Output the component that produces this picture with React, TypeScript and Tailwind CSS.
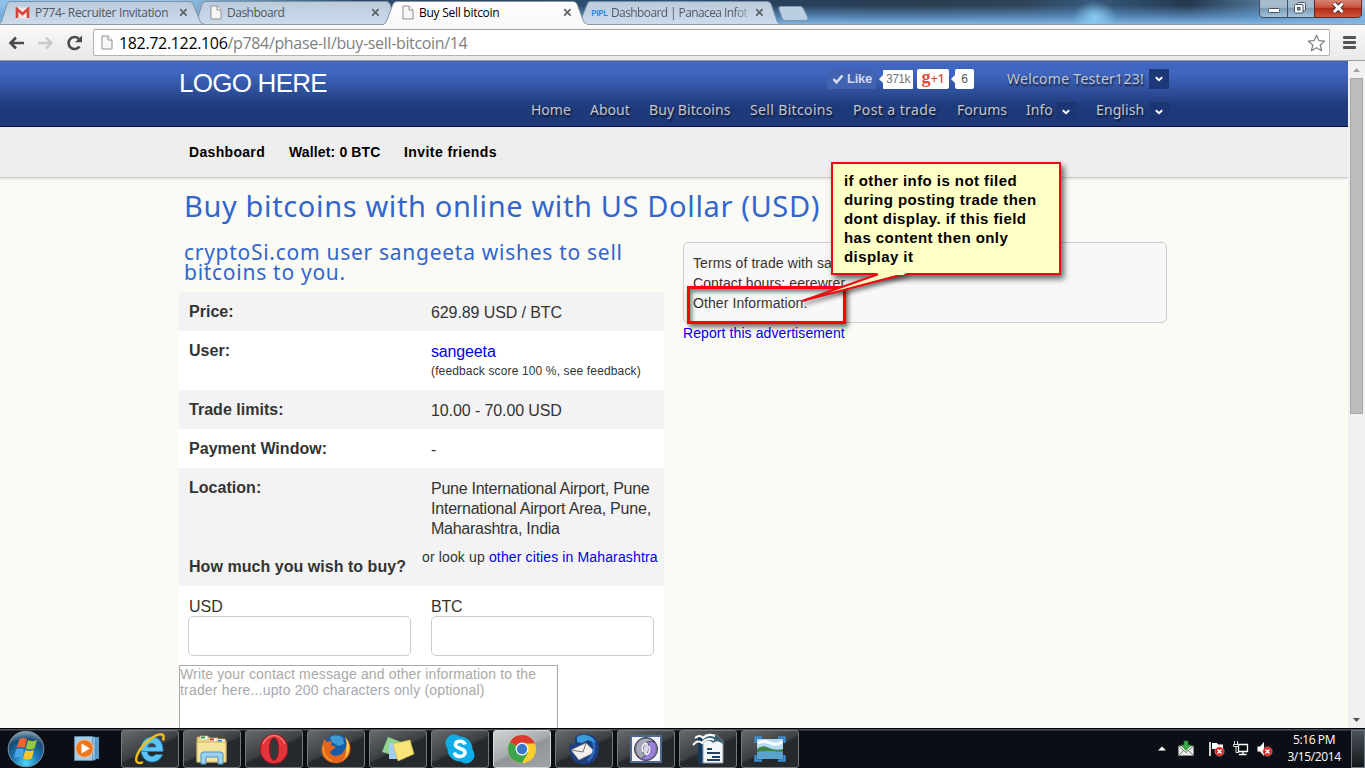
import type { ReactNode } from 'react';

function PageIcon({ className = '' }: { className?: string }) {
  return (
    <svg className={className} width="12" height="15" viewBox="0 0 12 15">
      <path d="M1 1h6.2L11 4.8V14H1z" fill="#f7f7f7" stroke="#8f8f8f" />
      <path d="M7 1v4h4" fill="#fff" stroke="#8f8f8f" />
    </svg>
  );
}

function CloseX() {
  return (
    <svg width="9" height="9" viewBox="0 0 9 9" className="shrink-0">
      <path d="M1.2 1.2l6.4 6.4M7.6 1.2L1.2 7.6" stroke="#5b6168" strokeWidth="1.7" />
    </svg>
  );
}

function TabStrip() {
  return (
    <div className="relative h-[25px] shrink-0 overflow-hidden bg-[#7fb4e4]">
      <svg className="absolute inset-0" width="1365" height="25" viewBox="0 0 1365 25">
        <defs>
          <linearGradient id="sky" x1="0" x2="1" y1="0" y2="0">
            <stop offset="0" stopColor="#8fc0ea" />
            <stop offset=".12" stopColor="#9ac9ee" />
            <stop offset=".26" stopColor="#2b4a6c" />
            <stop offset=".4" stopColor="#2b4a6c" />
            <stop offset=".5" stopColor="#2f4f74" />
            <stop offset=".57" stopColor="#27415c" />
            <stop offset=".68" stopColor="#2b3c4e" />
            <stop offset=".75" stopColor="#2f4358" />
            <stop offset=".8" stopColor="#36597c" />
            <stop offset=".87" stopColor="#24374c" />
            <stop offset=".92" stopColor="#4d708f" />
            <stop offset="1" stopColor="#a3c6e2" />
          </linearGradient>
          <linearGradient id="haze" x1="0" x2="0" y1="0" y2="1">
            <stop offset=".2" stopColor="#5f9ad2" stopOpacity="0" />
            <stop offset=".6" stopColor="#649fd8" stopOpacity=".6" />
            <stop offset="1" stopColor="#86bdea" />
          </linearGradient>
          <radialGradient id="spot">
            <stop offset="0" stopColor="#96dcff" />
            <stop offset="1" stopColor="#96dcff" stopOpacity="0" />
          </radialGradient>
          <linearGradient id="tab" x1="0" x2="0" y1="0" y2="1">
            <stop offset="0" stopColor="#bccbdb" />
            <stop offset="1" stopColor="#ccdcec" />
          </linearGradient>
          <linearGradient id="activeTab" x1="0" x2="0" y1="0" y2="1">
            <stop offset="0" stopColor="#fff" />
            <stop offset="1" stopColor="#f8f8f8" />
          </linearGradient>
          <linearGradient id="closeBtn" x1="0" x2="0" y1="0" y2="1">
            <stop offset="0" stopColor="#d98a7c" />
            <stop offset=".45" stopColor="#c9543f" />
            <stop offset=".5" stopColor="#b02a14" />
            <stop offset="1" stopColor="#cf5a3c" />
          </linearGradient>
          <linearGradient id="winBtn" x1="0" x2="0" y1="0" y2="1">
            <stop offset="0" stopColor="#a9bccd" />
            <stop offset=".45" stopColor="#a4bacd" />
            <stop offset=".5" stopColor="#7d9ab4" />
            <stop offset="1" stopColor="#a6c6e0" />
          </linearGradient>
        </defs>
        <rect width="1365" height="25" fill="url(#sky)" />
        <rect width="1365" height="25" fill="url(#haze)" />
        <ellipse cx="1095" cy="17" rx="22" ry="16" fill="url(#spot)" opacity=".8" />
        <path d="M579 24.5L588 2.5Q589 1.5 591 1.5H767Q770 1.5 771 4L777 21Q778 24 781 24.5z" fill="url(#tab)" stroke="#7890a8" />
        <path d="M196 24.5L202 4Q203 1.5 206 1.5H386Q389 1.5 390 4L396 24.5z" fill="url(#tab)" stroke="#7f93a8" />
        <path d="M-1 24.5Q1 23 2 20L7 4Q8 1.5 11 1.5H189Q192 1.5 193 4L200 21Q201 24 205 24.5z" fill="url(#tab)" stroke="#7f93a8" />
        <path d="M779 9Q778 6.5 781 6.5H800Q802 6.5 803 8L808 18Q808 20.5 806 20.5H786Q783 20.5 782 18z" fill="#bccfe2" stroke="#8296ac" />
        <path d="M0 24.5H1365" stroke="#8c9aa8" />
        <path d="M382 25Q386 24 387 20L393 4Q394 1.5 397 1.5H573Q576 1.5 577 4L583 20Q584 24 588 25z" fill="url(#activeTab)" stroke="#8492a0" />
        <path d="M384 24.5H587" stroke="#f9f9f9" />
        <path d="M1259.5 -1V13Q1259.5 17.5 1264 17.5H1287.5V-1z" fill="url(#winBtn)" stroke="#3f5063" />
        <path d="M1287.5 -1H1314.5V17.5H1287.5z" fill="url(#winBtn)" stroke="#3f5063" />
        <path d="M1314.5 -1V17.5H1357Q1361.5 17.5 1361.5 13V-1z" fill="url(#closeBtn)" stroke="#5b2a2a" />
        <rect x="1268.5" y="8.5" width="11" height="4" rx="1" fill="#fff" stroke="#49525f" />
        <rect x="1297.5" y="2.5" width="8" height="8" rx="1" fill="#eee" stroke="#49525f" />
        <rect x="1294.5" y="4.5" width="8.5" height="8.5" rx="1" fill="#fff" stroke="#49525f" />
        <rect x="1297.5" y="7.5" width="2.5" height="2.5" fill="#7d9ab4" stroke="#49525f" />
        <path d="M1334 3.5L1342.5 12M1342.5 3.5L1334 12" stroke="#4b3138" strokeWidth="5" />
        <path d="M1334 3.5L1342.5 12M1342.5 3.5L1334 12" stroke="#fff" strokeWidth="3" />
      </svg>
      <div className="relative flex h-[25px] items-center font-['Open_Sans','Noto_Sans',sans-serif] text-[12px] text-[#4f5660]">
        <div className="flex w-[188px] items-center pl-[15px]">
          <svg width="15" height="12" viewBox="0 0 15 12" className="shrink-0">
            <rect x="1" y=".5" width="13" height="11" fill="#f4e6e4" />
            <path d="M2 11V2l5.5 5L13 2v9" fill="none" stroke="#d5453b" strokeWidth="2.6" />
          </svg>
          <span className="ml-[5px] w-[144px] overflow-hidden whitespace-nowrap tracking-[-0.32px]">P774- Recruiter Invitation</span>
          <CloseX />
        </div>
        <div className="flex w-[192px] items-center pl-[22px]">
          <PageIcon />
          <span className="ml-[5px] w-[144px] whitespace-nowrap tracking-[-0.5px]">Dashboard</span>
          <CloseX />
        </div>
        <div className="flex w-[200px] items-center pl-[22px] text-black">
          <PageIcon />
          <span className="ml-[5px] w-[144px] whitespace-nowrap tracking-[-0.27px]">Buy Sell bitcoin</span>
          <CloseX />
        </div>
        <div className="flex items-center pl-[11px]">
          <span className="w-[19px] whitespace-nowrap font-['Open_Sans',sans-serif] text-[9px] font-semibold tracking-[-0.6px] text-[#1c86ee]">PIPL</span>
          <span className="w-[138px] whitespace-nowrap bg-gradient-to-r from-[#4f5660] from-90% to-[#4f5660]/30 bg-clip-text pl-[1px] tracking-[-0.6px] text-transparent">Dashboard | Panacea Infot</span>
          <span className="ml-[7px] flex"><CloseX /></span>
        </div>
      </div>
    </div>
  );
}

function Toolbar() {
  return (
    <div className="flex h-[36px] shrink-0 items-center border-b border-[#9c9c9c] bg-gradient-to-b from-[#f9f9f9] to-[#e9e9e9] pl-[8px] pr-[9px]">
      <svg width="17" height="14" viewBox="0 0 17 14">
        <path d="M16 7H3M8 1.5L2.5 7L8 12.5" fill="none" stroke="#4a4a4a" strokeWidth="2.6" />
      </svg>
      <svg className="ml-[12px]" width="17" height="14" viewBox="0 0 17 14">
        <path d="M1 7h13M9 1.5L14.5 7L9 12.5" fill="none" stroke="#c9c9c9" strokeWidth="2.4" />
      </svg>
      <svg className="ml-[12px]" width="18" height="16" viewBox="0 0 18 16">
        <path d="M13.5 11.5A6 6 0 1 1 12.7 3.7" fill="none" stroke="#4a4a4a" strokeWidth="2.6" />
        <path d="M9 7.3h7V.5z" fill="#4a4a4a" />
      </svg>
      <div className="ml-[9px] flex h-[27px] w-[1237px] items-center rounded-[2px] border border-[#b3b3b3] border-t-[#9f9f9f] bg-white pl-[7px] pr-[3px]">
        <PageIcon />
        <span className="ml-[6px] grow whitespace-nowrap font-['Open_Sans','Noto_Sans',sans-serif] text-[16px] leading-[24px] tracking-[-0.34px] text-[#808080]">
          <span className="text-black">182.72.122.106</span>/p784/phase-II/buy-sell-bitcoin/14
        </span>
        <svg width="19" height="18" viewBox="0 0 19 18">
          <path d="M9.5 1.2l2.3 5.4 5.9.5-4.5 3.9 1.4 5.7-5.1-3-5.1 3 1.4-5.700L1.3 7.1l5.9-.5z" fill="#fff" stroke="#7d7d7d" strokeWidth="1.2" strokeLinejoin="round" />
        </svg>
      </div>
      <div className="ml-[13px] flex flex-col gap-[2px]">
        <div className="h-[3px] w-[13px] rounded-[1px] bg-[#555]" />
        <div className="h-[3px] w-[13px] rounded-[1px] bg-[#555]" />
        <div className="h-[3px] w-[13px] rounded-[1px] bg-[#555]" />
      </div>
    </div>
  );
}

function Caret({ className }: { className: string }) {
  return (
    <span className={`flex h-[20px] w-[20px] items-center justify-center ${className}`}>
      <svg width="8" height="6" viewBox="0 0 8 6">
        <path d="M.8 1.2L4 4.2L7.2 1.2" fill="none" stroke="#fff" strokeWidth="1.9" />
      </svg>
    </span>
  );
}

function Header() {
  return (
    <header className="flex h-[66px] flex-col border-b border-[#04103a] bg-[linear-gradient(#4066c0_0px,#4066c0_12px,#1f3a7a_46px,#1f3a7a_66px)] pl-[179px] pr-[179px] font-['Noto_Sans','Open_Sans',sans-serif] text-[14px] text-[#c3c6cc] [text-shadow:1px_2px_2px_rgba(0,0,0,0.7)]">
      <div className="flex h-[36px] items-center">
        <span className="w-[648px] pt-[8px] font-['Liberation_Sans',Arial,sans-serif] text-[26px] leading-[30px] tracking-[-0.75px] text-white [text-shadow:none]">LOGO HERE</span>
        <span className="flex h-[20px] w-[49px] items-center rounded-[2px] bg-[#4262b2] pl-[5px] font-['Liberation_Sans',Arial,sans-serif] text-[13px] font-bold tracking-[-0.3px] text-[#ccd7f2] [text-shadow:none]">
          <svg className="mr-[3px]" width="12" height="10" viewBox="0 0 12 10">
            <path d="M1.5 5L4.5 8.3L10.5 1.5" fill="none" stroke="#d5def5" strokeWidth="2.6" />
          </svg>
          Like
        </span>
        <span className="ml-[3px] h-0 w-0 border-y-[4px] border-r-[4px] border-y-transparent border-r-white" />
        <span className="flex h-[19px] w-[30px] items-center justify-center rounded-[1px] bg-white font-['Liberation_Sans',Arial,sans-serif] text-[12px] tracking-[-0.5px] text-[#777] [text-shadow:none]">371k</span>
        <span className="ml-[4px] flex h-[20px] w-[32px] items-center justify-center rounded-[2px] bg-white text-[#dd4b39] [text-shadow:none]">
          <b className="-mt-[4px] font-['Liberation_Serif',serif] text-[18px] leading-[14px]">g</b>
          <span className="-mt-[2px] text-[13px] font-medium leading-[14px] tracking-[-0.5px]">+1</span>
        </span>
        <span className="ml-[2px] h-0 w-0 border-y-[4px] border-r-[4px] border-y-transparent border-r-white" />
        <span className="flex h-[20px] w-[19px] items-center justify-center rounded-[2px] bg-white font-['Liberation_Sans',Arial,sans-serif] text-[12px] text-[#555] [text-shadow:none]">6</span>
        <span className="ml-auto w-[142px] whitespace-nowrap pb-[1px] tracking-[0.28px]">Welcome Tester123!</span>
        <Caret className="bg-[#1d3777]" />
      </div>
      <nav className="flex h-[29px] items-center whitespace-nowrap pl-[352px] leading-[18px]">
        <span className="w-[59px] pb-[3px]">Home</span>
        <span className="w-[59px] pb-[3px]">About</span>
        <span className="w-[101px] pb-[3px] tracking-[0.08px]">Buy Bitcoins</span>
        <span className="w-[103px] pb-[3px] tracking-[0.35px]">Sell Bitcoins</span>
        <span className="w-[104px] pb-[3px] tracking-[0.4px]">Post a trade</span>
        <span className="w-[69px] pb-[3px]">Forums</span>
        <span className="w-[30px] pb-[3px]">Info</span>
        <Caret className="bg-[#1c3574]" />
        <span className="ml-[20px] w-[53px] pb-[3px] tracking-[0.1px]">English</span>
        <Caret className="bg-[#1c3574]" />
      </nav>
    </header>
  );
}

function Row({ label, shade, className, children }: { label: string; shade?: boolean; className: string; children: ReactNode }) {
  return (
    <div className={`flex pl-[10px] ${shade ? 'bg-[#f3f3f3]' : 'bg-white'} ${className}`}>
      <div className="w-[242px] shrink-0 pt-[10px] font-bold tracking-[0.03px]">{label}</div>
      <div className="grow pt-[11px]">{children}</div>
    </div>
  );
}

function Trade() {
  return (
    <section className="w-[485px] shrink-0">
      <h2 className="h-[50px] pl-[5px] font-['Noto_Sans','Open_Sans',sans-serif] text-[21px] leading-[20px] tracking-[0.72px] text-[#3465cc]">
        cryptoSi.com user sangeeta wishes to sell<br />bitcoins to you.
      </h2>
      <div className="text-[16px] leading-[20px] text-[#333]">
        <Row label="Price:" shade className="h-[39px] tracking-[-0.1px]">629.89 USD / BTC</Row>
        <Row label="User:" className="h-[59px]">
          <a className="tracking-[-0.15px] text-[#0000ee]">sangeeta</a>
          <div className="whitespace-nowrap text-[12px] leading-[18px] tracking-[0.14px]">(feedback score 100 %, see feedback)</div>
        </Row>
        <Row label="Trade limits:" shade className="h-[39px] tracking-[-0.1px]">10.00 - 70.00 USD</Row>
        <Row label="Payment Window:" className="h-[39px]">-</Row>
        <Row label="Location:" shade className="h-[79px] tracking-[-0.26px]">
          Pune International Airport, Pune<br />
          <span className="tracking-[-0.21px]">International Airport Area, Pune,</span><br />
          Maharashtra, India
        </Row>
        <div className="flex h-[39px] bg-[#f3f3f3] pl-[10px]">
          <div className="w-[233px] shrink-0 whitespace-nowrap pt-[10px] font-bold tracking-[0.04px]">How much you wish to buy?</div>
          <div className="whitespace-nowrap text-[14px] tracking-[0.14px]">or look up <a className="text-[#0000ee]">other cities in Maharashtra</a></div>
        </div>
        <div className="h-[160px] bg-white pt-[11px]">
          <div className="flex gap-[20px] pl-[9px]">
            <label className="flex w-[223px] flex-col"><span className="h-[19px] pl-[1px]">USD</span><input className="h-[40px] rounded-[5px] border border-[#ccc] bg-white" /></label>
            <label className="flex w-[223px] flex-col"><span className="h-[19px] tracking-[-0.2px]">BTC</span><input className="h-[40px] rounded-[5px] border border-[#ccc] bg-white" /></label>
          </div>
          <div className="mt-[9px] h-[90px] w-[379px] whitespace-nowrap border border-[#a9a9a9] text-[14px] leading-[16px] tracking-[0.14px] text-[#a9a9a9]">
            Write your contact message and other information to the<br />
            <span className="tracking-[0.18px]">trader here...upto 200 characters only (optional)</span>
          </div>
        </div>
      </div>
    </section>
  );
}

function Callout() {
  return (
    <>
      <div className="absolute left-[687px] top-[225px] h-[38px] w-[159px] border-[3px] border-[#f00] shadow-[2px_3px_5px_rgba(0,0,0,0.6),inset_2px_3px_4px_rgba(0,0,0,0.5)]" />
      <div className="absolute left-[831px] top-[101px] h-[113px] w-[230px] border-2 border-[#ee0a10] bg-[#ffffc6] pl-[11px] pt-[7px] text-[15px] font-bold leading-[19px] tracking-[0.44px] text-black shadow-[3px_4px_6px_rgba(0,0,0,0.6)]">
        if other info is not filed<br />during posting trade then<br />dont display. if this field<br />has content then only<br />display it
      </div>
      <svg className="absolute left-[795px] top-[210px] drop-shadow-[2px_3px_2px_rgba(0,0,0,0.5)]" width="120" height="40" viewBox="0 0 120 40">
        <path d="M84 3L7 30L109 3z" fill="#ffffc6" />
        <path d="M84 3L7 30L109 3" fill="none" stroke="#ee0a10" strokeWidth="2" />
        <path d="M82.500 1H114L108 4H83z" fill="#ffffc6" />
      </svg>
    </>
  );
}

function Scrollbar() {
  return (
    <div className="flex h-full w-[17px] shrink-0 flex-col items-center bg-[#f1f1f1]">
      <div className="flex h-[17px] items-center">
        <svg width="7" height="4" viewBox="0 0 7 4"><path d="M0 4L3.5 0L7 4z" fill="#a3a3a3" /></svg>
      </div>
      <div className="h-[336px] w-[13px] border border-[#a8a8a8] bg-[#bcbcbc]" />
      <div className="mt-auto flex h-[17px] items-center">
        <svg width="7" height="4" viewBox="0 0 7 4"><path d="M0 0L3.5 4L7 0z" fill="#505050" /></svg>
      </div>
    </div>
  );
}

function Icon({ name }: { name: string }) {
  switch (name) {
    case 'ie':
      return (
        <svg width="32" height="32" viewBox="0 0 32 32">
          <path d="M7 18.5H29C29.5 9 24.5 4 18 4S7 9 7 16.5S12 29 18 29c5 0 9-3 10.5-7.5H21.5c-2 3-8 2.5-8-3M13.500 14c.5-5 8-5 8.5 0z" fill="#5cc4f2" fillRule="evenodd" stroke="#1878b8" strokeWidth=".8" />
          <path d="M9 29C3 32 0 28 4 20C9 10 22 0 28 1.5c2 .5 2 3 1 6" fill="none" stroke="#f5bd16" strokeWidth="2.4" />
        </svg>
      );
    case 'explorer':
      return (
        <svg width="34" height="32" viewBox="0 0 34 32">
          <path d="M2 4h12l2 3h15v22H2z" fill="#f1dd8c" stroke="#b79b4c" />
          <path d="M5 3h8v4H5zM14 5h9v4h-9zM22 6h8v4h-8z" fill="#fff" stroke="#c8ae65" strokeWidth=".7" />
          <path d="M6 3.5h4v2H6z" fill="#24a148" /><path d="M15 5.5h4v2h-4z" fill="#d33b2c" /><path d="M23 7h4v2h-4z" fill="#2c8cdc" />
          <path d="M2 9h29v20H2z" fill="#f3e39c" stroke="#cdb268" />
          <path d="M6 31V21q0-2 3-2h16q3 0 3 2v10h-5v-7H11v7z" fill="#9bd1ee" stroke="#4d94c2" />
        </svg>
      );
    case 'opera':
      return (
        <svg width="30" height="32" viewBox="0 0 30 32">
          <ellipse cx="15" cy="16" rx="13.8" ry="14.8" fill="#e2343a" stroke="#a3141c" />
          <path d="M4 11Q8 2.500 15 2.500T26 11" fill="none" stroke="#f07a7a" strokeWidth="1.5" />
          <ellipse cx="15" cy="16" rx="4.4" ry="11.3" fill="#33383c" stroke="#8e1017" />
        </svg>
      );
    case 'firefox':
      return (
        <svg width="32" height="32" viewBox="0 0 32 32">
          <circle cx="16.5" cy="14.5" r="13" fill="#1b5ca6" />
          <path d="M10 4q7-4 13 1l1 6-6 2-6-4z" fill="#3b9ad4" />
          <path d="M25 4c5 4 7 11 4.500 17C26 28 20 31 14 30C6 29 1 23 1.500 16C2 11 4 8 4 6l3 3 5-1-1 4 5 2-4 3-2 2c1 4 6 5 9 3 2-1 4-1 4-3 4-3 5-9 2-15z" fill="#e4661c" />
          <path d="M25 4c6 6 6 17-2 23 2-2 4-7 3-11 1-4 1-8-1-12z" fill="#fbd140" />
          <path d="M3.500 13q-1 11 8.500 15" fill="none" stroke="#f39a2b" strokeWidth="1.5" />
        </svg>
      );
    case 'notes':
      return (
        <svg width="34" height="28" viewBox="0 0 34 28">
          <path d="M7 2l13 5-5 14-14-4z" fill="#93d48d" />
          <path d="M8 8h15v16H8z" fill="#a3cdf5" />
          <path d="M12 9l17-4 4 14-16 7z" fill="#f8e477" stroke="#d4b83c" strokeWidth=".6" />
        </svg>
      );
    case 'skype':
      return (
        <svg width="32" height="32" viewBox="0 0 32 32">
          <circle cx="10" cy="10" r="8.5" fill="#10aee8" /><circle cx="22" cy="22" r="8.5" fill="#10aee8" /><circle cx="16" cy="16" r="12.5" fill="#10aee8" />
          <path d="M21 11.5q-1-3.500-5.500-3.300-4 .3-4 3.600c0 4.500 9.500 2.700 9.500 7.600 0 2.600-2.300 4-5 4-3.500 0-5.200-1.700-5.500-4" fill="none" stroke="#fff" strokeWidth="3.6" />
        </svg>
      );
    case 'chrome':
      return (
        <svg width="30" height="30" viewBox="0 0 30 30">
          <circle cx="15" cy="15" r="14" fill="#f9cf2d" />
          <path d="M15 15L2.9 8A14 14 0 0 0 15 29l6-10.500z" fill="#3ca44a" />
          <path d="M15 15L2.9 8A14 14 0 0 1 28 9.5H15z" fill="#dd3b30" />
          <circle cx="15" cy="15" r="6.5" fill="#fff" /><circle cx="15" cy="15" r="5.2" fill="#3b78c9" />
        </svg>
      );
    case 'thunderbird':
      return (
        <svg width="32" height="32" viewBox="0 0 32 32">
          <path d="M7 5Q11 0 18 1q12 1 13 13 0 13-10 17-10 2-17-5l-3-9 1-7 5 2z" fill="#1b3f82" />
          <path d="M9 4q4-3 9-2 7 1 10 8l-8-3-6 3-5-1z" fill="#3a9bdc" />
          <path d="M3 17l15-7 9 9-16 8z" fill="#f2efec" stroke="#998f8c" strokeWidth=".7" />
          <path d="M3 17l12 2 3-9" fill="none" stroke="#7a7270" />
          <path d="M25 9q4 9-5 19" fill="none" stroke="#2c6cc0" strokeWidth="2.500" />
        </svg>
      );
    case 'swirl':
      return (
        <svg width="32" height="28" viewBox="0 0 32 28">
          <path d="M1 1h30v26H1z" fill="#f3f3f8" stroke="#4e6a90" strokeWidth="2" />
          <circle cx="16" cy="14" r="11.500" fill="#d9d6e6" stroke="#2b2b3f" />
          <path d="M21 4.500a11 11 0 0 1-5 20.500q-6-.5-8-4 6 2 9-2 2-4 2-7 0-4-2-5z" fill="#9a80d6" stroke="#4b3a80" strokeWidth=".7" />
          <path d="M11 23.500A11 11 0 0 1 16 3q6 .5 8 4-6-2-9 2-2 4-2 7 0 4 2 5z" fill="#a5a9b6" stroke="#33384a" strokeWidth=".7" />
          <path d="M16 8q-5 2-3 9M16 20q5-2 3-9" fill="none" stroke="#f3f3f8" strokeWidth="1.600" />
        </svg>
      );
    case 'writer':
      return (
        <svg width="32" height="32" viewBox="0 0 32 32">
          <path d="M6 2h5v29H6z" fill="#14385c" />
          <path d="M11 2h14l6 6v22H11z" fill="#f4f7fa" stroke="#8899ab" />
          <path d="M11 2h14l6 6v3q-6-5-10-1-4-5-10 0z" fill="#3d6075" />
          <path d="M15 16h5M15 20h13M20 24h8M15 27h13" stroke="#1d4468" strokeWidth="2" />
          <path d="M1 12q5-6 9-2 5-6 12-3M3 5q5-4 8 0 5-5 12-2" fill="none" stroke="#fff" strokeWidth="2" />
        </svg>
      );
    default:
      return (
        <svg width="32" height="26" viewBox="0 0 32 26">
          <path d="M3 3h26v20H3z" fill="#b5daf4" />
          <path d="M3 13q6-5 12-1 6 3 14 1v5H3z" fill="#3f8245" />
          <path d="M3 16q12-2 26 0v7H3z" fill="#5ba3cc" />
          <path d="M4 7q6-3 12 0t12-1" fill="none" stroke="#fff" strokeWidth="3" />
          <path d="M1.5 7V1.5H8M24 1.5h6.500V7M30.500 19v5.500H24M8 24.500H1.500V19" fill="none" stroke="#3e8ed0" strokeWidth="2.400" />
        </svg>
      );
  }
}

const apps = ['ie', 'explorer', 'opera', 'firefox', 'notes', 'skype', 'chrome', 'thunderbird', 'swirl', 'writer', 'picture'];

function RedBadge({ x, y }: { x: number; y: number }) {
  return (
    <g transform={`translate(${x} ${y})`}>
      <circle r="4.6" fill="#d9231c" stroke="#f3a09b" strokeWidth=".6" />
      <path d="M-2-2L2 2M2-2L-2 2" stroke="#fff" strokeWidth="1.5" />
    </g>
  );
}

function Taskbar() {
  return (
    <div className="flex h-[40px] shrink-0 items-center border-t border-black bg-[#060a10] bg-gradient-to-b from-[#47525c] from-[1px] to-[#0b0f15] to-[2px]">
      <svg className="ml-[7px]" width="38" height="38" viewBox="0 0 38 38">
        <defs>
          <radialGradient id="orb" cx=".5" cy=".9" r=".9">
            <stop offset="0" stopColor="#4dd6f8" /><stop offset=".4" stopColor="#1a78b5" /><stop offset=".75" stopColor="#184a72" /><stop offset="1" stopColor="#8fa9ba" />
          </radialGradient>
        </defs>
        <circle cx="19" cy="19" r="17.8" fill="url(#orb)" stroke="#7f93a3" />
        <path d="M12.5 9q4-2 7.500 0L17.500 18q-3.500-2-8 0z" fill="#ef6330" />
        <path d="M21 10q4 2 9 0L27.500 18.500q-4.500 2-8.700 0z" fill="#94c83c" />
        <path d="M9 19.500q4.500-2 8 0L15 28q-3.500-2-8 0z" fill="#45a6e2" />
        <path d="M18.400 20q4 2 8.700 0l-2.300 8.500q-4.500 2-8.700 0z" fill="#fcc42c" />
      </svg>
      <svg className="ml-[29px]" width="26" height="27" viewBox="0 0 26 27">
        <path d="M8 2h17v22H8z" fill="#5a9cc8" /><path d="M4 2h17.500v23H4z" fill="#86bfe0" stroke="#4b84ac" strokeWidth=".7" /><path d="M.5 1.5h18v24H.5z" fill="#a6cbe2" stroke="#5a8fb2" strokeWidth=".7" />
        <circle cx="10.500" cy="13.500" r="8.7" fill="#f0761c" stroke="#fbc79a" strokeWidth=".8" />
        <path d="M7.500 8.500L16 13.500L7.500 18.500z" fill="#fff" />
      </svg>
      <div className="ml-[21px] flex gap-[4px]">
        {apps.map((name) => (
          <div
            key={name}
            className={`flex h-[38px] w-[58px] items-center justify-center rounded-[3px] border ${
              name === 'chrome'
                ? 'border-[#d5d7d9] bg-[linear-gradient(155deg,#d0d2d3_0%,#a8abad_48%,#929597_53%,#a0a3a5_100%)]'
                : 'border-[#74797d] bg-[linear-gradient(155deg,#666a6d_0%,#3c4043_48%,#25292c_53%,#272a2d_100%)]'
            }`}
          >
            <Icon name={name} />
          </div>
        ))}
      </div>
      <svg className="ml-auto" width="8" height="5" viewBox="0 0 8 5"><path d="M0 4.5L4 .5L8 4.5z" fill="#fff" /></svg>
      <svg className="ml-[12px]" width="16" height="17" viewBox="0 0 16 17">
        <path d="M.5 6h15v9.500H.5z" fill="#ececec" stroke="#999" strokeWidth=".6" />
        <path d="M1 6.500l7 6 7-6M1 15l5-5M15 15l-5-5" fill="none" stroke="#777" />
        <path d="M6 1h4v4h3L8 10.500L3 5h3z" fill="#3aa846" stroke="#1d7a2c" strokeWidth=".6" />
      </svg>
      <svg className="ml-[14px]" width="17" height="16" viewBox="0 0 17 16">
        <path d="M2 1v14" stroke="#fff" strokeWidth="1.6" /><path d="M4 2h5l1 1.500h5V9H9L8 8H4z" fill="#fff" />
        <RedBadge x={11.5} y={10.5} />
      </svg>
      <svg className="ml-[8px]" width="16" height="15" viewBox="0 0 16 15">
        <path d="M5.500 3.500h9v7h-9zM10 11v3M6 13.500h7.500" fill="none" stroke="#fff" strokeWidth="1.3" />
        <path d="M1.500 0v3M4.500 0v3M.5 3.500h5v2h-5zM3 5.500v6h3" fill="none" stroke="#ddd" />
      </svg>
      <svg className="ml-[8px]" width="16" height="16" viewBox="0 0 16 16">
        <path d="M.5 5.500h2.500L7 1v14L3 10.500H.5z" fill="#fff" /><RedBadge x={10.5} y={10.5} />
      </svg>
      <div className="ml-[13px] w-[56px] whitespace-nowrap pb-[1px] text-center font-['Open_Sans','Noto_Sans',sans-serif] text-[12px] leading-[17px] tracking-[-0.4px] text-white">
        5:16 PM<br />3/15/2014
      </div>
      <div className="ml-[9px] h-[38px] w-[14px] border border-[#6c757d] bg-gradient-to-b from-[#4b5258] to-[#15191d]" />
    </div>
  );
}

export default function App() {
  return (
    <div className="flex h-[768px] w-[1365px] flex-col overflow-hidden font-['Liberation_Sans',Arial,sans-serif]">
      <TabStrip />
      <Toolbar />
      <div className="flex h-[667px] overflow-hidden">
        <main className="relative w-[1348px] shrink-0 overflow-hidden bg-[#fafbf5]">
          <Header />
          <div className="flex h-[51px] items-center border-b border-[#ccc] bg-[#eee] pl-[189px] text-[14px] font-bold text-black shadow-[0_1px_2px_rgba(0,0,0,0.12)]">
            <span className="w-[100px] tracking-[0.32px]">Dashboard</span>
            <span className="w-[115px] tracking-[0.14px]">Wallet: 0 BTC</span>
            <span className="tracking-[0.42px]">Invite friends</span>
          </div>
          <h1 className="h-[64px] pl-[184px] pt-[8px] font-['Noto_Sans','Open_Sans',sans-serif] text-[29px] leading-[40px] tracking-[0.63px] text-[#3465cc]">
            Buy bitcoins with online with US Dollar (USD)
          </h1>
          <div className="flex gap-[19px] pl-[179px]">
            <Trade />
            <aside className="w-[484px] text-[14px] leading-[20px] tracking-[0.09px] text-[#333]">
              <div className="h-[81px] rounded-[5px] border border-[#ccc] bg-[#f8f8f8] pl-[9px] pt-[10px]">
                Terms of trade with sangeeta<br />Contact hours: eerewrer<br />Other Information:
              </div>
              <a className="text-[#0000ee]">Report this advertisement</a>
            </aside>
          </div>
          <Callout />
        </main>
        <Scrollbar />
      </div>
      <Taskbar />
    </div>
  );
}
